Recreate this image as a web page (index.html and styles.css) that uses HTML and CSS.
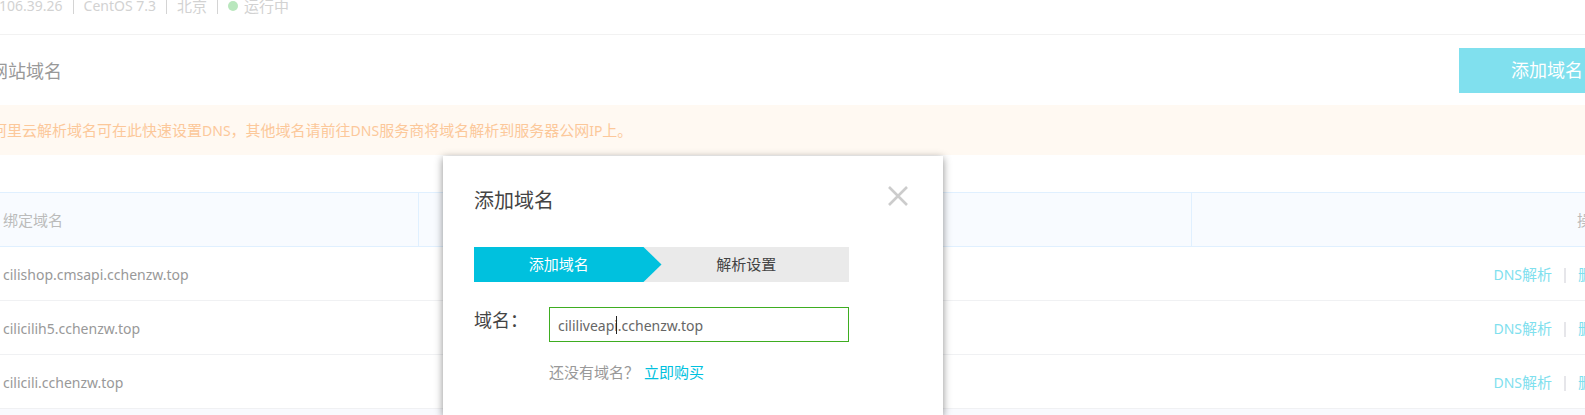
FILE: index.html
```html
<!DOCTYPE html>
<html lang="zh-CN">
<head>
<meta charset="utf-8">
<title>网站域名</title>
<link rel="stylesheet" href="styles.css">
</head>
<body>
<div class="page">
  <header class="server">
    <span class="latin">106.39.26</span>
    <i class="bar"></i>
    <span class="latin">CentOS 7.3</span>
    <i class="bar"></i>
    <span>北京</span>
    <i class="bar"></i>
    <span class="status"><i class="dot"></i>运行中</span>
  </header>
  <main>
    <div class="heading">
      <h1>网站域名</h1>
      <button class="add" type="button">添加域名</button>
    </div>
    <p class="notice">阿里云解析域名可在此快速设置<span class="latin">DNS</span>，其他域名请前往<span class="latin">DNS</span>服务商将域名解析到服务器公网<span class="latin">IP</span>上。</p>
    <table class="domains">
      <thead>
        <tr><th class="col-name">绑定域名</th><th class="col-info"></th><th class="col-actions">操作</th></tr>
      </thead>
      <tbody>
        <tr><td><span class="latin">cilishop.cmsapi.cchenzw.top</span></td><td></td><td class="actions"><a href="#"><span class="latin">DNS</span>解析</a><i class="bar"></i><a href="#">删除</a></td></tr>
        <tr><td><span class="latin">cilicilih5.cchenzw.top</span></td><td></td><td class="actions"><a href="#"><span class="latin">DNS</span>解析</a><i class="bar"></i><a href="#">删除</a></td></tr>
        <tr><td><span class="latin">cilicili.cchenzw.top</span></td><td></td><td class="actions"><a href="#"><span class="latin">DNS</span>解析</a><i class="bar"></i><a href="#">删除</a></td></tr>
      </tbody>
    </table>
  </main>
</div>
<div class="overlay">
  <section class="dialog" role="dialog" aria-labelledby="dialog-title">
    <div class="dialog-head">
      <h2 id="dialog-title">添加域名</h2>
      <button class="close" type="button" aria-label="关闭">
        <svg width="20" height="20" viewBox="0 0 20 20"><path d="M1 1L19 19M19 1L1 19" fill="none" stroke="#ccc" stroke-width="2.6"/></svg>
      </button>
    </div>
    <ol class="steps">
      <li class="step current">添加域名</li>
      <li class="step">解析设置</li>
    </ol>
    <div class="field">
      <label for="domain">域名：</label>
      <div class="control">
        <div class="input-box">
          <input id="domain" type="text" value="cililiveapi.cchenzw.top">
          <i class="caret"></i>
        </div>
        <p class="hint">还没有域名？<a href="#">立即购买</a></p>
      </div>
    </div>
  </section>
</div>
</body>
</html>
```
FILE: styles.css
```css
* { box-sizing: border-box; }
body {
  display: flow-root;
  height: 100vh;
  margin: 0;
  overflow: hidden;
  position: relative;
  background: #f9fafe;
  color: #999;
  font: 15px/20px "Noto Sans", "Noto Sans CJK SC", sans-serif;
}
h1, h2, p, ol { margin: 0; padding: 0; font-weight: 400; }
a { color: inherit; text-decoration: none; }
button { border: 0; padding: 0; font: inherit; cursor: pointer; }
.latin { font-size: 14px; line-height: 18px; }

.page { margin: -4px -50px 0 -10px; background: #fff; }

.server {
  display: flex;
  align-items: center;
  padding: 0 0 18px 9px;
  border-bottom: 1px solid #f2f2f2;
  color: #d2d2d2;
}
.bar { width: 1px; height: 15px; background: #d4d4d4; }
.server .bar { margin: 0 10px; }
.status { display: flex; align-items: center; gap: 6px; }
.dot { width: 10px; height: 10px; border-radius: 50%; background: #b9e7bd; }

.heading {
  display: flex;
  align-items: center;
  justify-content: space-between;
  padding: 13px 0 12px;
}
.heading h1 { font-size: 18px; }
.add { padding: 0 52px; background: #80e0ee; color: #fff; font-size: 18px; line-height: 45px; }

.notice { padding: 15px 2px; background: #fff9f2; color: #fcc89a; }

.domains {
  width: 100%;
  margin-top: 37px;
  table-layout: fixed;
  border-collapse: separate;
  border-spacing: 0;
}
.domains th, .domains td {
  height: 54px;
  padding: 16px 27px 16px 13px;
  border-bottom: 1px solid #f0f1f3;
  text-align: left;
  font-weight: 400;
}
.domains th {
  height: 55px;
  border: solid #e0f0ff;
  border-width: 1px 1px 1px 0;
  background: #f8fbff;
  color: #bbb;
}
.domains .col-name { width: 26.1%; }
.domains .col-info { width: 47%; }
.domains .col-actions { text-align: right; }
.actions a { color: #80e0ee; }
.domains .actions { text-align: right; }
.actions .bar { display: inline-block; width: 2px; margin: 0 12px; vertical-align: -3px; background: #e6e6ea; }

.overlay {
  position: absolute;
  inset: 0;
  padding: 156px 0 0 443px;
}
.dialog {
  width: 500px;
  min-height: 100%;
  padding: 30px 31px 0;
  background: #fff;
  box-shadow: 0 2px 8px rgba(0, 0, 0, .45);
  color: #444;
}
.dialog-head { display: flex; justify-content: space-between; align-items: flex-start; padding-right: 4px; }
.dialog-head h2 { font-size: 20px; line-height: 30px; }
.close { display: flex; background: none; }

.steps {
  display: flex;
  width: 375px;
  margin-top: 31px;
  background: #eaeaea;
  list-style: none;
}
.step { flex: 1; padding-right: 18px; line-height: 35px; text-align: center; }
.step.current {
  background: #00c1de;
  color: #fff;
  clip-path: polygon(0 0, calc(100% - 18px) 0, 100% 50%, calc(100% - 18px) 100%, 0 100%);
}

.field { display: flex; width: 375px; margin-top: 25px; }
.field label { width: 75px; font-size: 18px; line-height: 26px; }
.control { flex: 1; }
.input-box { position: relative; }
.input-box input {
  display: block;
  width: 100%;
  height: 35px;
  padding: 2px 8px 0;
  border: 1px solid #3ead21;
  border-radius: 0;
  outline: 0;
  background: #fff;
  color: #666;
  font: inherit;
  font-size: 14px;
}
.caret { position: absolute; left: 67px; top: 9px; width: 1px; height: 18px; background: #222; }
.hint { display: flex; gap: 5px; margin-top: 20px; color: #999; }
.hint a { color: #00c1de; }
```
